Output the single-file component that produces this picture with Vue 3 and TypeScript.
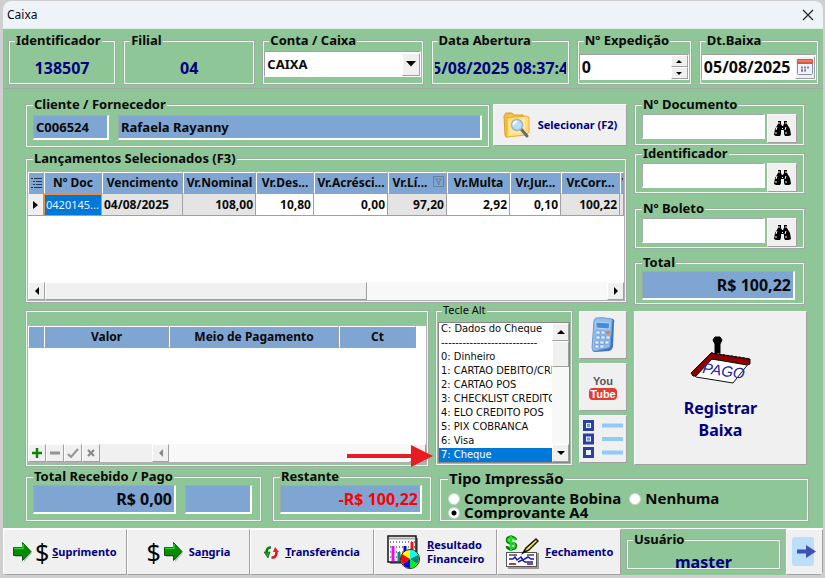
<script setup lang="ts">
import { ref } from 'vue'

interface Column {
  key: string
  title: string
  width: number
  kind: 'text' | 'locked' | 'edit' | 'picked'
  value: string
  filter?: boolean
}

const account = ref('CAIXA')
const expedition = ref(0)
const settleDate = ref('05/08/2025')
const clientCode = ref('C006524')
const clientName = ref('Rafaela Rayanny')
const printMode = ref('a4')
const payOption = ref('7')

const columns: Column[] = [
  { key: 'doc', title: 'Nº Doc', width: 58, kind: 'picked', value: '0420145...' },
  { key: 'due', title: 'Vencimento', width: 81, kind: 'text', value: '04/08/2025' },
  { key: 'nominal', title: 'Vr.Nominal', width: 73, kind: 'locked', value: '108,00' },
  { key: 'discount', title: 'Vr.Des...', width: 58, kind: 'edit', value: '10,80' },
  { key: 'extra', title: 'Vr.Acrésci...', width: 74, kind: 'edit', value: '0,00' },
  { key: 'net', title: 'Vr.Lí...', width: 59, kind: 'locked', value: '97,20', filter: true },
  { key: 'fine', title: 'Vr.Multa', width: 63, kind: 'edit', value: '2,92' },
  { key: 'interest', title: 'Vr.Jur...', width: 51, kind: 'edit', value: '0,10' },
  { key: 'total', title: 'Vr.Corr...', width: 59, kind: 'locked', value: '100,22' },
]

const searches = ref([
  { id: 'documento', label: 'Nº Documento', value: '' },
  { id: 'identificador', label: 'Identificador', value: '' },
  { id: 'boleto', label: 'Nº Boleto', value: '' },
])

const payOptions = [
  { id: 'C', text: 'C: Dados do Cheque' },
  { id: '-', text: '---------------------------' },
  { id: '0', text: '0: Dinheiro' },
  { id: '1', text: '1: CARTAO DEBITO/CREDITO' },
  { id: '2', text: '2: CARTAO POS' },
  { id: '3', text: '3: CHECKLIST CREDITO' },
  { id: '4', text: '4: ELO CREDITO POS' },
  { id: '5', text: '5: PIX COBRANCA' },
  { id: '6', text: '6: Visa' },
  { id: '7', text: '7: Cheque' },
]
</script>

<template>
  <div class="window">
    <header class="titlebar">
      <span>Caixa</span>
      <button class="close" aria-label="Fechar">
        <svg width="12" height="12" viewBox="0 0 12 12"><path d="M1 1L11 11M11 1L1 11" stroke="#222" stroke-width="1.2" /></svg>
      </button>
    </header>

    <section class="topbar">
      <fieldset class="box">
        <legend>Identificador</legend>
        <output class="big">138507</output>
      </fieldset>
      <fieldset class="box">
        <legend>Filial</legend>
        <output class="big">04</output>
      </fieldset>
      <fieldset class="box snug">
        <legend><label for="conta">Conta / Caixa</label></legend>
        <div class="field combo">
          <select id="conta" v-model="account"><option>CAIXA</option></select>
          <span class="raised drop"><svg width="10" height="6" viewBox="0 0 10 6"><path d="M0 0H10L5 5.500Z" /></svg></span>
        </div>
      </fieldset>
      <fieldset class="box">
        <legend>Data Abertura</legend>
        <output class="big clip">05/08/2025 08:37:45</output>
      </fieldset>
      <fieldset class="box snug">
        <legend><label for="expedicao">Nº Expedição</label></legend>
        <div class="field low">
          <input id="expedicao" v-model="expedition" class="large" type="text" />
          <span class="spin">
            <button class="raised" aria-label="Aumentar" @click="expedition++"><svg width="6" height="3" viewBox="0 0 6 3"><path d="M3 0L6 3H0Z" /></svg></button>
            <button class="raised" aria-label="Diminuir" @click="expedition--"><svg width="6" height="3" viewBox="0 0 6 3"><path d="M0 0H6L3 3Z" /></svg></button>
          </span>
        </div>
      </fieldset>
      <fieldset class="box snug">
        <legend><label for="baixa">Dt.Baixa</label></legend>
        <div class="field low">
          <input id="baixa" v-model="settleDate" class="large" type="text" />
          <button class="raised calendar" aria-label="Calendário">
            <svg width="16" height="16" viewBox="0 0 16 16">
              <rect x=".5" y=".5" width="15" height="15" rx="1" fill="#eef2fb" stroke="#8290ba" />
              <rect width="16" height="5" rx="1" fill="#d9573f" /><path d="M1 2H15" stroke="#f3a18e" />
              <path d="M4 8.500H13M4 11.500H10" stroke="#7288bd" stroke-width="2" stroke-dasharray="2 1" /><path d="M4 11.500H6M8 11.500H9" stroke="#e0553f" stroke-width="2" />
            </svg>
          </button>
        </div>
      </fieldset>
    </section>

    <main>
      <div class="upper">
        <div class="left">
          <div class="row client">
            <fieldset class="box pad grow">
              <legend><label for="codigo">Cliente / Fornecedor</label></legend>
              <input id="codigo" v-model="clientCode" class="blue code" />
              <input v-model="clientName" class="blue grow" aria-label="Nome do cliente" />
            </fieldset>
            <button class="raised select-client">
              <svg width="28" height="28" viewBox="0 0 28 28">
                <path d="M1 5L3 2H9L11 4H20L22 7V23L3 26L2 24Z" fill="#f6bf45" stroke="#d99a2b" />
                <path d="M4 7L23 5L26 6V21L23 24L4 26Z" fill="#ffdf75" stroke="#e9ae3b" />
                <path d="M6 10L22 7V21L7 24Z" fill="#ffe99b" />
                <path d="M18 18L24 25" stroke="#666a70" stroke-width="3" stroke-linecap="round" />
                <circle cx="14" cy="14" r="5.500" fill="#b5e1f8" stroke="#9cb4c8" stroke-width="1.500" /><path d="M10.500 14Q10.500 10.500 14 10.500" fill="none" stroke="#fff" stroke-width="2" />
              </svg>
              <span>Selecionar (F2)</span>
            </button>
          </div>

          <fieldset class="box entries">
            <legend>Lançamentos Selecionados (F3)</legend>
            <div class="grid">
              <table>
                <colgroup>
                  <col style="width: 16px" />
                  <col v-for="c in columns" :key="c.key" :style="{ width: c.width + 'px' }" />
                  <col />
                </colgroup>
                <thead>
                  <tr>
                    <th class="mark"><svg width="11" height="10" viewBox="0 0 11 10"><path d="M0 .5H2M3 .5H11M2 3.500H4M5 3.500H11M2 6.500H4M5 6.500H11M0 9.500H2M3 9.500H11" stroke="#26364d" /></svg></th>
                    <th v-for="c in columns" :key="c.key" :class="{ filtered: c.filter }">
                      {{ c.title }}
                      <svg v-if="c.filter" class="filter" width="11" height="11" viewBox="0 0 11 11"><rect x=".5" y=".5" width="10" height="10" fill="none" stroke="#63809f" /><path d="M2.500 3H8.500L6 6V9L5 8V6Z" fill="none" stroke="#63809f" /></svg>
                    </th>
                    <th>V</th>
                  </tr>
                </thead>
                <tbody>
                  <tr>
                    <td class="mark"><svg width="5" height="8" viewBox="0 0 5 8"><path d="M0 0L5 4L0 8Z" /></svg></td>
                    <td v-for="c in columns" :key="c.key" :class="c.kind">{{ c.value }}</td>
                    <td class="locked"></td>
                  </tr>
                </tbody>
              </table>
              <div class="hbar">
                <button class="raised sq" aria-label="Rolar para a esquerda"><svg width="4" height="8" viewBox="0 0 4 8"><path d="M4 0V8L0 4Z" /></svg></button>
                <span class="raised thumb"></span>
                <button class="raised sq end" aria-label="Rolar para a direita"><svg width="4" height="8" viewBox="0 0 4 8"><path d="M0 0V8L4 4Z" /></svg></button>
              </div>
            </div>
          </fieldset>

          <div class="row middle">
            <section class="box payments grow">
              <div class="grid">
                <table>
                  <colgroup><col style="width: 16px" /><col style="width: 125px" /><col style="width: 170px" /><col style="width: 77px" /><col /></colgroup>
                  <thead>
                    <tr><th></th><th>Valor</th><th>Meio de Pagamento</th><th>Ct</th><td class="blank"></td></tr>
                  </thead>
                </table>
                <div class="hbar">
                  <button class="raised tool" aria-label="Inserir"><svg width="10" height="10" viewBox="0 0 10 10"><path d="M5 0V10M0 5H10" stroke="#078307" stroke-width="2.500" /></svg></button>
                  <button class="raised tool" aria-label="Excluir"><svg width="10" height="10" viewBox="0 0 10 10"><path d="M0 5H10" stroke="#939393" stroke-width="3" /></svg></button>
                  <button class="raised tool" aria-label="Confirmar"><svg width="12" height="10" viewBox="0 0 12 10"><path d="M1 6L4 9L11 1" fill="none" stroke="#939393" stroke-width="2" /></svg></button>
                  <button class="raised tool" aria-label="Cancelar"><svg width="8" height="8" viewBox="0 0 8 8"><path d="M1 1L7 7M7 1L1 7" stroke="#858585" stroke-width="2" /></svg></button>
                  <span class="filler"></span>
                  <button class="raised sq" aria-label="Rolar para a esquerda"><svg width="4" height="8" viewBox="0 0 4 8"><path d="M4 0V8L0 4Z" fill="#858585" /></svg></button>
                  <button class="raised sq end" aria-label="Rolar para a direita"></button>
                </div>
              </div>
              <svg class="pointer" width="86" height="22" viewBox="0 0 86 22"><path d="M0 9H64V0L86 11L64 22V13H0Z" fill="#e81c23" /></svg>
            </section>

            <fieldset class="box keys">
              <legend><label for="tecle">Tecle Alt</label></legend>
              <div class="listbox">
                <select id="tecle" v-model="payOption" size="10">
                  <option v-for="o in payOptions" :key="o.id" :value="o.id">{{ o.text }}</option>
                </select>
                <span class="vbar">
                  <button class="raised sq" aria-label="Rolar para cima"><svg width="8" height="4" viewBox="0 0 8 4"><path d="M4 0L8 4H0Z" /></svg></button>
                  <span class="raised vthumb"></span>
                  <button class="raised sq down" aria-label="Rolar para baixo"><svg width="8" height="4" viewBox="0 0 8 4"><path d="M0 0H8L4 4Z" /></svg></button>
                </span>
              </div>
            </fieldset>

            <div class="shortcuts">
              <button class="raised" aria-label="Calculadora">
                <svg width="24" height="36" viewBox="0 0 24 36">
                  <path d="M5 1Q13 0 22 2Q24 3 23 6L22 30Q21 33 18 34L4 35Q1 35 1 31L3 4Q3 2 5 1Z" fill="#3d74bd" />
                  <path d="M5 1Q12 0 20 2Q22 3 21 5L19 29Q19 31 16 31L4 34Q1 34 1 31L3 4Q3 2 5 1Z" fill="#94bdea" stroke="#6f9fd8" />
                  <path d="M5 5L19 6L18 12L5 11Z" fill="#438bdf" stroke="#b8d8f7" />
                  <g fill="#e3f0fc" stroke="#5f90cc" stroke-width=".6"><rect x="5" y="14" width="4" height="3" /><rect x="10" y="14" width="4" height="3" /><rect x="5" y="19" width="4" height="3" /><rect x="10" y="19" width="4" height="3" /><rect x="15" y="19" width="4" height="3" /><rect x="4" y="24" width="4" height="3" /><rect x="9" y="24" width="4" height="3" /><rect x="14" y="24" width="4" height="3" /><rect x="4" y="28" width="4" height="3" /><rect x="9" y="28" width="4" height="3" /></g>
                  <circle cx="17" cy="15.500" r="2" fill="#ee7a37" />
                </svg>
              </button>
              <button class="raised youtube"><span>You</span><span class="tube">Tube</span></button>
              <button class="raised" aria-label="Opções">
                <svg width="40" height="38" viewBox="0 0 40 38">
                  <g fill="#e8f5ff" stroke="#303f9f" stroke-width="3"><rect x="1.500" y="1.500" width="8" height="8" /><rect x="1.500" y="15" width="8" height="8" /><rect x="1.500" y="28.500" width="8" height="8" /></g>
                  <path d="M4 5.500H7M4 19H7" stroke="#42a5f5" stroke-width="3" />
                  <path d="M19 5.500H40M19 19H40M19 32.500H40" stroke="#90caf9" stroke-width="4" />
                </svg>
              </button>
            </div>
          </div>
        </div>

        <aside>
          <fieldset v-for="s in searches" :key="s.id" class="box search" :class="s.id">
            <legend><label :for="s.id">{{ s.label }}</label></legend>
            <input :id="s.id" v-model="s.value" class="white" />
            <button class="raised find" :aria-label="'Buscar ' + s.label">
              <svg width="17" height="15" viewBox="0 0 17 15">
                <path d="M4 0H7V3L8 5H9L10 3V0H13V3L16 8L17 14L15 15H11L10 13V9H7V13L6 15H2L0 14L1 8L4 3Z" />
                <path d="M5 1V3M12 1V3M3 6L2 9M12 6L11 9M2 11V13M12 11V13M8.500 7V8" stroke="#fff" stroke-width="1" />
              </svg>
            </button>
          </fieldset>
          <fieldset class="box sum">
            <legend><label for="total">Total</label></legend>
            <input id="total" class="blue money" value="R$ 100,22" readonly />
          </fieldset>
          <button class="raised register">
            <svg width="62" height="48" viewBox="0 0 62 48">
              <path d="M3 38L21 23L59 27L43 47L6 41Z" fill="#fff" stroke="#111" />
              <path d="M1 37L21 17L60 23L60 28L57 29L22 23L6 40L3 40Z" fill="#8b0000" stroke="#111" />
              <path d="M21 17L60 23" stroke="#111" stroke-width="1.500" stroke-dasharray="2 2" />
              <path d="M25 1H30L32 4L30 8V17H25V8L23 4Z" fill="#000" stroke="#000" />
              <text x="12" y="37" transform="rotate(8 12 37)" class="paid">PAGO</text>
            </svg>
            <span>Registrar<br />Baixa</span>
          </button>
        </aside>
      </div>

      <div class="row totals">
        <fieldset class="box sum received">
          <legend><label for="recebido">Total Recebido / Pago</label></legend>
          <input id="recebido" class="blue money wide" value="R$ 0,00" readonly />
          <input class="blue money" aria-label="Complemento" readonly />
        </fieldset>
        <fieldset class="box sum remaining">
          <legend><label for="restante">Restante</label></legend>
          <input id="restante" class="blue money owed" value="-R$ 100,22" readonly />
        </fieldset>
        <fieldset class="box print grow">
          <legend>Tipo Impressão</legend>
          <div class="choices">
            <label><input v-model="printMode" type="radio" name="print" value="bobina" />Comprovante Bobina</label>
            <label><input v-model="printMode" type="radio" name="print" value="none" />Nenhuma</label>
          </div>
          <div class="choices second">
            <label><input v-model="printMode" type="radio" name="print" value="a4" />Comprovante A4</label>
          </div>
        </fieldset>
      </div>
    </main>

    <footer>
      <button class="raised action">
        <svg width="19" height="20" viewBox="0 0 19 20"><path d="M2 7H11V2L19 11L11 20V15H2Z" fill="#888" opacity=".5" /><path d="M.5 5.500H9.500V.5L18 9.500L9.500 18.500V13.500H.5Z" fill="#078b07" stroke="#075b07" /><path d="M1 6.500H10V2" fill="none" stroke="#25d925" stroke-width="1.500" /></svg>
        <i class="cash">$</i><span><u>S</u>uprimento</span>
      </button>
      <button class="raised action">
        <i class="cash">$</i>
        <svg width="19" height="20" viewBox="0 0 19 20"><path d="M2 7H11V2L19 11L11 20V15H2Z" fill="#888" opacity=".5" /><path d="M.5 5.500H9.500V.5L18 9.500L9.500 18.500V13.500H.5Z" fill="#078b07" stroke="#075b07" /><path d="M1 6.500H10V2" fill="none" stroke="#25d925" stroke-width="1.500" /></svg>
        <span>Sa<u>n</u>gria</span>
      </button>
      <button class="raised action">
        <svg width="15" height="13" viewBox="0 0 15 13"><path d="M7 1.500Q2.500 1 2.500 7" fill="none" stroke="#087a12" stroke-width="2.500" /><path d="M0 6L6 6L4 12Z" fill="#17a321" stroke="#064a0b" stroke-width=".6" /><path d="M7.500 11.500Q12.500 12 12.500 6" fill="none" stroke="#e0131b" stroke-width="2.500" /><path d="M9 6L11 1L15 6Z" fill="#f01d24" /></svg>
        <span><u>T</u>ransferência</span>
      </button>
      <button class="raised action">
        <svg width="34" height="34" viewBox="0 0 34 34">
          <path d="M3 3H31V29H3Z" fill="#888" /><rect x="1" y="1" width="28" height="26" fill="#fff" stroke="#111" stroke-width="1.500" />
          <path d="M2 3.500H28" stroke="#aaa" stroke-width="2" /><path d="M3 7H28M3 12H28M3 17H28M3 22H28" stroke="#111" stroke-dasharray="1 2" />
          <path d="M6 11V26" stroke="#f0f" stroke-width="3" /><path d="M12 17V26" stroke="#088" stroke-width="3" /><path d="M18 11V26" stroke="#00f" stroke-width="3" /><path d="M25 7V18" stroke="#f11" stroke-width="3" />
          <circle cx="23" cy="24" r="9.500" fill="#ff0" stroke="#222" /><path d="M23 24V15A9 9 0 0 1 31 20Z" fill="#0ff" /><path d="M23 24L31 20A9 9 0 0 1 30 29Z" fill="#088" /><path d="M23 24L30 29A9 9 0 0 1 23 33Z" fill="#0e2" /><path d="M23 24V33A9 9 0 0 1 16 29Z" fill="#00e" /><path d="M23 24L16 29A9 9 0 0 1 15 19Z" fill="#f00" />
        </svg>
        <span><u>R</u>esultado<br />Financeiro</span>
      </button>
      <button class="raised action">
        <svg width="34" height="34" viewBox="0 0 34 34">
          <path d="M3 18H34V34H3Z" fill="#999" /><rect x="1.500" y="17.500" width="30" height="14" fill="#fff" stroke="#555" />
          <path d="M4 20H12M22 20H29" stroke="#777" stroke-width="2" /><path d="M4 24H8L10 22L12 25L16 22L18 25L23 22L26 24H29M13 27L17 25L20 27H28" fill="none" stroke="#1d18b5" stroke-width="1.500" /><path d="M4 29H11M22 29H28" stroke="#a34848" stroke-width="2" />
          <path d="M11 5Q10 2 6 2Q2 2 2 5Q2 8 6 8Q11 8 11 11Q11 14 6 14Q2 14 2 11M6 0V16" fill="none" stroke="#087908" stroke-width="2.500" /><path d="M10 5Q10 3 6 3Q3 3 3 5Q3 7 6 7Q10 8 10 11Q10 13 6 13M6 0V16" fill="none" stroke="#22e12b" stroke-width="1.800" />
          <path d="M18 18L21 13L31 4L33 6L24 15Z" fill="#ffed19" stroke="#111" stroke-width="1.500" />
        </svg>
        <span><u>F</u>echamento</span>
      </button>
      <div class="user">
        <fieldset class="box">
          <legend>Usuário</legend>
          <output class="big">master</output>
        </fieldset>
      </div>
      <button class="raised exit" aria-label="Sair">
        <svg width="24" height="30" viewBox="0 0 24 30"><rect width="22" height="29" rx="3" fill="#bbdefb" /><path d="M5 12.500H14V8L24 14.500L14 21V16.500H5Z" fill="#3f51b5" /></svg>
      </button>
    </footer>
  </div>
</template>

<style>
body {
  margin: 0;
  background: #cfcfcf;
}
</style>

<style scoped>
* {
  box-sizing: border-box;
}
.window {
  min-height: calc(100vh - 4px);
  margin: 1px 2px 3px 3px;
  display: flex;
  flex-direction: column;
  background: #8fc697;
  border-radius: 8px 8px 4px 4px;
  overflow: hidden;
  font: bold 13px "Noto Sans", "Open Sans", sans-serif;
  color: #0a0a0a;
}
button,
input,
select {
  margin: 0;
  font: inherit;
  color: inherit;
}
input,
select {
  min-width: 0;
  outline: 0;
  border: 0;
  border-radius: 0;
}
button {
  padding: 0;
}
svg {
  display: block;
  flex: none;
}
.titlebar {
  display: flex;
  align-items: center;
  justify-content: space-between;
  height: 27px;
  padding: 0 9px 0 4px;
  background: #eef3f9;
  font-weight: normal;
  font-size: 12px;
}
.close {
  border: 0;
  background: none;
}
.raised {
  display: flex;
  align-items: center;
  justify-content: center;
  flex: none;
  background: #f0f0f0;
  border: 1px solid;
  border-color: #fff #a0a0a0 #a0a0a0 #fff;
}
.box {
  min-width: 0;
  margin: 0;
  padding: 0;
  border: 1px solid #a3a9a4;
  box-shadow: inset 0 0 0 1px #eef6ef;
}
legend {
  height: 14px;
  margin-left: 6px;
  padding: 0 1px;
  line-height: 14px;
  white-space: nowrap;
  background: #8fc697;
}
.topbar {
  display: grid;
  grid-template-columns: 108fr 132fr 161fr 139fr 115fr 120fr;
  gap: 7px;
  padding: 4px 4px 3px 5px;
  border-top: 1px solid #d9eedc;
  border-bottom: 1px solid #a3a9a4;
}
.topbar .box {
  height: 52px;
}
.big {
  display: flex;
  justify-content: center;
  margin: 0 3px;
  padding-top: 9px;
  line-height: 24px;
  font-size: 16px;
  color: #00007f;
}
.clip {
  overflow: hidden;
  white-space: nowrap;
}
.snug {
  padding: 0 2px 0 1px;
}
.snug legend {
  margin-left: 5px;
}
.field {
  display: flex;
  align-items: center;
  height: 26px;
  background: #fff;
  border: 1px solid;
  border-color: #a0a0a0 #fff #fff #a0a0a0;
}
.combo {
  margin-top: 4px;
}
.field.low {
  margin-top: 7px;
}
.field input,
.field select {
  flex: 1;
  width: 0;
  padding: 0 2px;
  appearance: none;
  background: #fff;
}
.field .large {
  font-size: 16px;
}
.drop {
  width: 18px;
  height: 23px;
}
.spin .raised {
  width: 17px;
  height: 12px;
}
.calendar {
  width: 20px;
  height: 23px;
}
main {
  padding: 8px 14px 6px 22px;
}
.upper {
  display: flex;
  gap: 7px;
  padding-right: 2px;
}
.left {
  flex: 1;
  min-width: 0;
}
.row {
  display: flex;
}
.grow {
  flex: 1;
}
.client {
  gap: 3px;
}
.pad,
.search,
.sum {
  display: flex;
}
.pad legend,
.search legend,
.sum legend,
.print legend {
  margin-left: 0;
}
.pad {
  gap: 9px;
  height: 51px;
  padding: 4px 7px;
}
.blue,
.white {
  height: 25px;
  padding: 0 2px;
  border: 2px solid;
  border-color: #a3a9a4 #fff #fff #a3a9a4;
  border-top-width: 1px;
  border-left-width: 1px;
}
.blue {
  background: #7fa5d2;
}
.white {
  background: #fff;
}
.code {
  width: 76px;
}
.select-client {
  gap: 7px;
  width: 134px;
  height: 42px;
  margin-top: 7px;
  font-size: 11px;
  line-height: 16px;
  color: #00007f;
}
.entries {
  height: 152px;
  margin-top: 3px;
  padding: 6px 1px 1px;
}
.grid {
  display: flex;
  flex-direction: column;
  background: #fff;
  border: 1px solid #b0b4b0;
}
.entries .grid {
  height: 130px;
}
table {
  width: 100%;
  table-layout: fixed;
  border-collapse: separate;
  border-spacing: 0;
  font-size: 12px;
}
th,
td {
  overflow: hidden;
  height: 22px;
  padding: 0 2px;
  line-height: 20px;
  white-space: nowrap;
  border-right: 1px solid #a0a0a0;
  border-bottom: 1px solid #a0a0a0;
}
th {
  padding: 0 1px;
  text-align: center;
  background: #7fa5d2;
  border-left: 1px solid #fff;
  border-top: 1px solid #fff;
}
.mark {
  padding: 0;
  background: #f0f0f0;
}
th.mark {
  background: #7fa5d2;
}
.mark svg {
  margin: 0 auto;
}
.filtered {
  position: relative;
  padding-right: 16px;
}
.filter {
  position: absolute;
  top: 3px;
  right: 2px;
}
.text,
.locked {
  background: #e4e4e4;
}
.locked,
.edit {
  text-align: right;
}
.picked {
  padding: 0 1px;
  background: #0078d7;
  border: 1px solid #ed8b38;
  color: #e9f4ff;
  font-weight: normal;
  font-size: 11px;
}
.hbar {
  display: flex;
  height: 18px;
  margin-top: auto;
  background: #f8f8f8;
}
.sq {
  width: 17px;
  height: 18px;
}
.end {
  margin-left: auto;
}
.thumb {
  width: 54%;
}
.tool {
  width: 18px;
}
.filler {
  width: 52px;
  background: #f0f0f0;
}
.middle {
  align-items: flex-start;
}
.payments {
  position: relative;
  height: 157px;
  margin-top: 7px;
  padding: 14px 1px 1px;
}
.payments .grid {
  height: 138px;
}
.blank {
  border: 0;
}
.pointer {
  position: absolute;
  right: -5px;
  bottom: -1px;
}
.keys {
  width: 138px;
  height: 163px;
  margin: 0 6px;
  padding: 5px 2px 2px;
}
.keys legend {
  margin-left: 4px;
  font-weight: normal;
  font-size: 11px;
}
.listbox {
  display: flex;
  height: 141px;
  background: #fff;
  border: 1px solid #888;
}
.listbox select {
  flex: 1;
  width: 0;
  height: 139px;
  padding: 0;
  overflow: hidden;
  background: #fff;
  font: 11px "DejaVu Sans Condensed", "DejaVu Sans", sans-serif;
}
.listbox option {
  min-height: 0;
  height: 14px;
  padding: 0 2px;
  line-height: 14px;
  overflow: hidden;
}
.listbox option:checked {
  background: #0078d7 linear-gradient(#0078d7, #0078d7);
  color: #fff;
}
.vbar {
  display: flex;
  flex-direction: column;
  background: #f8f8f8;
}
.vthumb {
  height: 26px;
}
.down {
  margin-top: auto;
}
.shortcuts {
  display: grid;
  gap: 4px;
  width: 48px;
  margin-top: 8px;
}
.shortcuts .raised {
  height: 48px;
}
.youtube {
  flex-direction: column;
  gap: 1px;
  font: bold 11px "Liberation Sans", sans-serif;
  line-height: 12px;
  color: #575757;
}
.tube {
  padding: 0 1px;
  border-radius: 4px;
  background: #e23b31;
  color: #fff;
}
aside {
  flex: none;
  width: 173px;
}
.search,
.sum {
  width: 171px;
}
.search {
  gap: 2px;
  height: 49px;
  padding: 3px 7px 0;
}
.identificador {
  height: 48px;
}
.boleto {
  margin: 7px 0 6px;
  height: 48px;
}
.search .white {
  flex: 1;
}
.find {
  width: 30px;
  height: 29px;
}
.sum {
  gap: 9px;
  height: 50px;
  padding: 2px 9px 2px 7px;
}
.money {
  flex: 1;
  width: 0;
  height: 29px;
  text-align: right;
  font-size: 16px;
}
.owed {
  color: #f00;
}
.register {
  flex-direction: column;
  gap: 13px;
  width: 173px;
  height: 154px;
  margin-top: 6px;
  font-size: 16px;
  line-height: 22px;
  color: #00007f;
}
.paid {
  font: italic 15px "Liberation Sans", sans-serif;
  fill: #2020a0;
}
.totals {
  margin-top: 2px;
}
.totals .sum {
  height: 53px;
}
.totals .received {
  width: 237px;
}
.received .wide {
  flex: none;
  width: 143px;
}
.totals .remaining {
  width: 160px;
  margin: 0 7px 0 10px;
}
.print {
  height: 51px;
  margin-top: 2px;
  padding: 6px 8px 0;
  font-size: 15px;
}
.choices {
  display: flex;
  gap: 8px;
  height: 15px;
  overflow: hidden;
  line-height: 15px;
}
.choices label {
  display: flex;
  align-items: center;
  gap: 4px;
}
.choices.second {
  height: 13px;
  line-height: 13px;
}
.choices input {
  appearance: none;
  width: 12px;
  height: 12px;
  background: #fff;
  border: 1px solid #ccd5cd;
  border-radius: 50%;
}
.choices input:checked {
  background: radial-gradient(#000 0 2px, #fff 3px);
}
footer {
  display: grid;
  grid-template-columns: repeat(5, 123fr) 164fr 37fr;
  flex: 1;
  min-height: 47px;
  border-top: 1px solid #fff;
}
.action {
  gap: 3px;
  font-size: 11px;
  line-height: 14px;
  text-align: left;
  color: #00007f;
}
.action svg + span {
  margin-left: 3px;
}
.cash {
  font: 25px "Noto Sans", sans-serif;
  line-height: 24px;
  color: #000;
}
.user {
  padding: 3px 5px 2px;
}
.user .big {
  height: 23px;
  padding-top: 4px;
}
</style>
